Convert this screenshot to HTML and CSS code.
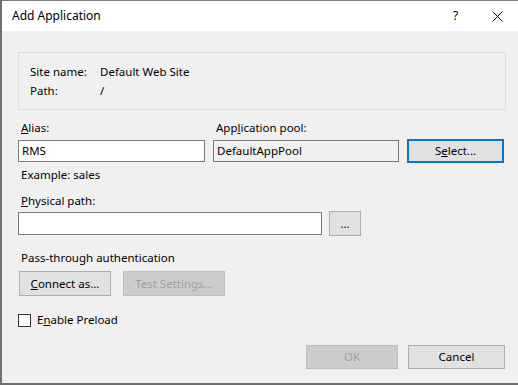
FILE: index.html
```html
<!DOCTYPE html>
<html>
<head>
<meta charset="utf-8">
<link rel="stylesheet" href="styles.css">
</head>
<body>
<div class="window">
  <div class="titlebar">
    <span class="title">Add Application</span>
    <span class="help">?</span>
    <span class="close">
      <svg width="11" height="11" viewBox="0 0 11 11"><path d="M0.5 0.5 L10.5 10.5 M10.5 0.5 L0.5 10.5" stroke="#000" stroke-width="1" fill="none"/></svg>
    </span>
  </div>
  <div class="content">
    <div class="groupbox">
      <div class="inforow"><span class="infolabel">Site name:</span><span>Default Web Site</span></div>
      <div class="inforow"><span class="infolabel">Path:</span><span>/</span></div>
    </div>

    <div class="labels">
      <span class="label col1"><u>A</u>lias:</span>
      <span class="label col2">App<u>l</u>ication pool:</span>
    </div>
    <div class="fieldrow">
      <div class="textbox col1">RMS</div>
      <div class="textbox readonly col2">DefaultAppPool</div>
      <div class="button focused selectbtn">S<u>e</u>lect...</div>
    </div>
    <div class="label example">Example: sales</div>

    <div class="label physlabel"><u>P</u>hysical path:</div>
    <div class="fieldrow pathrow">
      <div class="textbox pathbox"></div>
      <div class="button browsebtn">...</div>
    </div>

    <div class="label passlabel">Pass-through authentication</div>
    <div class="btnrow">
      <div class="button connectbtn"><u>C</u>onnect as...</div>
      <div class="button disabled testbtn">Test Settings...</div>
    </div>

    <div class="checkrow">
      <span class="checkbox"></span>
      <span>E<u>n</u>able Preload</span>
    </div>

    <div class="footer">
      <div class="button disabled okbtn">OK</div>
      <div class="button cancelbtn">Cancel</div>
    </div>
  </div>
</div>
</body>
</html>
```

FILE: styles.css
```css
html, body {
  margin: 0;
  padding: 0;
  background: #f0f0f0;
}
body {
  font-family: "Noto Sans", "Open Sans", sans-serif;
  font-size: 11.5px;
  color: #000;
}
u {
  text-underline-offset: 1px;
}
.window {
  width: 516px;
  height: 382px;
  border-left: 2px solid #707070;
  border-top: 1px solid #7a7a7a;
  border-bottom: 2px solid #707070;
  background: #f0f0f0;
  overflow: hidden;
}
.titlebar {
  height: 30px;
  background: #fff;
  display: flex;
  align-items: center;
  position: relative;
}
.title {
  margin-left: 10px;
  line-height: 16px;
  font-size: 12px;
}
.help {
  position: absolute;
  left: 451px;
  top: 7px;
  line-height: 16px;
  font-size: 12px;
}
.close {
  position: absolute;
  left: 490px;
  top: 10px;
  width: 11px;
  height: 11px;
  display: block;
}
.close svg { display: block; }
.content {
  padding: 0 13px 0 16px;
}
.groupbox {
  margin-top: 21px;
  width: 488px;
  height: 58px;
  box-sizing: border-box;
  border: 1px solid #dcdcdc;
  padding: 9px 0 0 11px;
}
.inforow {
  display: flex;
  line-height: 19px;
  height: 19px;
}
.infolabel {
  width: 70px;
}
.label {
  line-height: 16px;
  height: 16px;
  padding-left: 3px;
}
.labels {
  display: flex;
  margin-top: 10px;
}
.labels .label { display: block; }
.col1 { width: 187px; box-sizing: border-box; }
.col2 { width: 186px; box-sizing: border-box; }
.labels .col1 { margin-right: 8px; }
.fieldrow {
  display: flex;
  align-items: center;
  height: 24px;
  margin-top: 3px;
}
.textbox {
  height: 22px;
  box-sizing: border-box;
  border: 1px solid #7a7a7a;
  background: #fff;
  padding-left: 3px;
  line-height: 20px;
}
.fieldrow .col1 { margin-right: 8px; }
.textbox.readonly {
  background: #f0f0f0;
}
.button {
  box-sizing: border-box;
  border: 1px solid #adadad;
  background: #e1e1e1;
  display: flex;
  align-items: center;
  justify-content: center;
  line-height: 16px;
}
.button.focused {
  border: 2px solid #0078d7;
}
.button.disabled {
  background: #cccccc;
  border-color: #bfbfbf;
  color: #a0a0a0;
}
.selectbtn {
  margin-left: 8px;
  width: 97px;
  height: 24px;
}
.example {
  margin-top: 4px;
}
.physlabel {
  margin-top: 10px;
}
.pathrow {
  margin-top: 2px;
  height: 25px;
}
.pathbox {
  width: 304px;
  height: 23px;
}
.browsebtn {
  margin-left: 7px;
  width: 32px;
  height: 25px;
}
.passlabel {
  margin-top: 14px;
}
.btnrow {
  display: flex;
  margin-top: 5px;
  height: 25px;
}
.connectbtn {
  margin-left: 1px;
  width: 92px;
  height: 25px;
}
.testbtn {
  margin-left: 12px;
  width: 102px;
  height: 25px;
}
.checkrow {
  margin-top: 16px;
  display: flex;
  align-items: center;
  height: 16px;
  line-height: 16px;
}
.checkbox {
  width: 13px;
  height: 13px;
  box-sizing: border-box;
  border: 1px solid #333;
  background: #fff;
  margin-right: 6px;
}
.footer {
  margin-top: 17px;
  display: flex;
  justify-content: flex-end;
  gap: 10px;
  height: 24px;
}
.okbtn {
  width: 92px;
  height: 24px;
}
.cancelbtn {
  width: 97px;
  height: 24px;
}
```
